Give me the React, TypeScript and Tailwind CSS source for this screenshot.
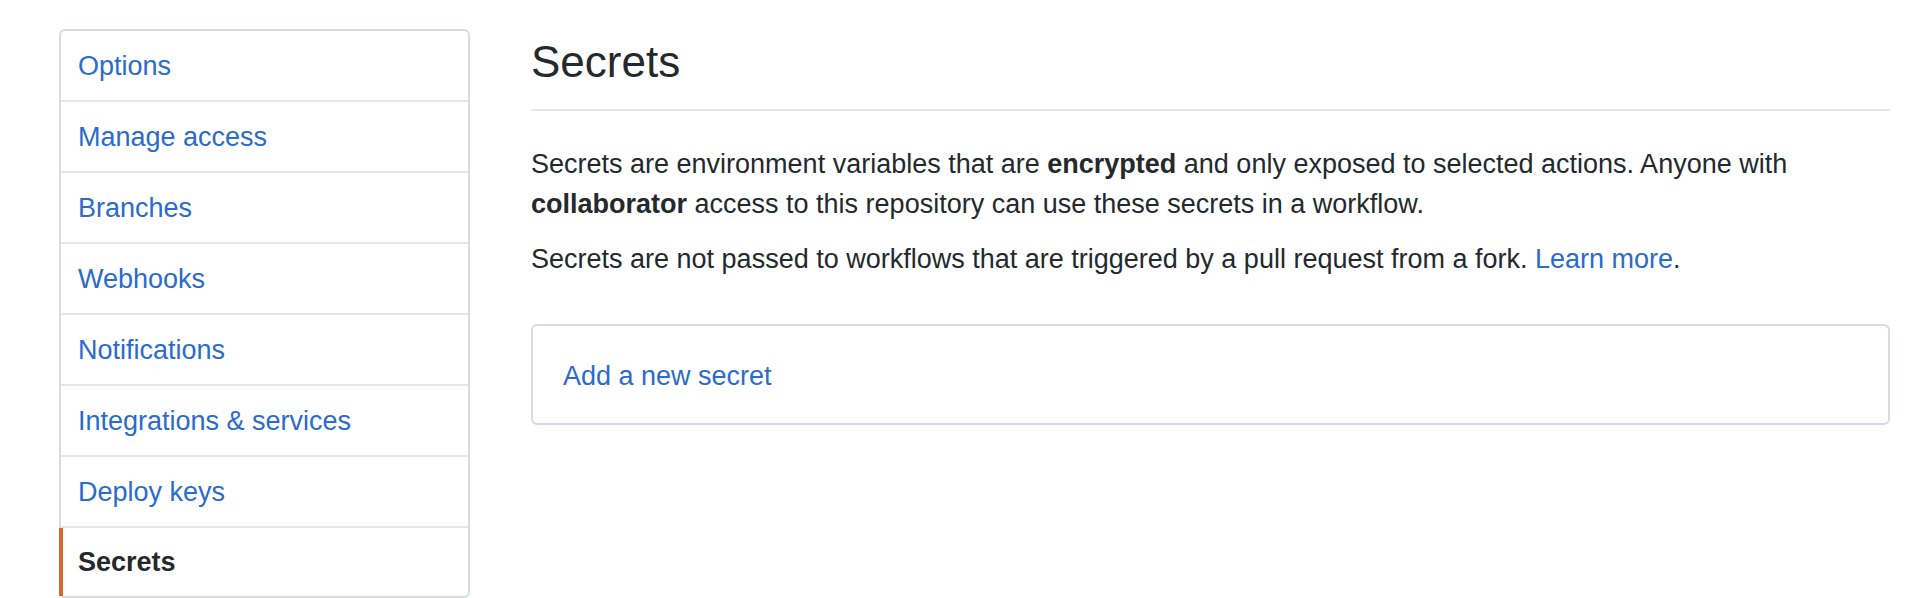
const menuItems = [
  'Options',
  'Manage access',
  'Branches',
  'Webhooks',
  'Notifications',
  'Integrations & services',
  'Deploy keys',
  'Secrets',
];

function SettingsMenu({ selected }: { selected: string }) {
  return (
    <nav className="w-[411px] shrink-0 self-start border-2 border-[#d8dbdf] rounded-[6px] bg-white">
      {menuItems.map((item, i) => {
        const isSelected = item === selected;
        const isLast = i === menuItems.length - 1;
        return (
          <div
            key={item}
            className={`relative flex items-center pl-[17px] text-[27px] leading-[40px] ${
              isLast ? 'h-[68px]' : 'h-[71px] border-b-2 border-[#e4e6e9]'
            } ${isSelected ? 'font-bold text-[#24292e]' : 'text-[#2b6bcb]'}`}
          >
            {isSelected && (
              <span className="absolute left-[-2px] top-0 bottom-0 w-[4px] bg-[#d8692e]" />
            )}
            {item}
          </div>
        );
      })}
    </nav>
  );
}

export default function App() {
  return (
    <div
      className="min-h-[598px] bg-white flex pl-[59px] pt-[29px] pr-[30px] text-[#24292e]"
      style={{ fontFamily: '"Liberation Sans", Arial, sans-serif' }}
    >
      <SettingsMenu selected="Secrets" />

      <main className="flex-1 ml-[61px] min-w-0">
        <div className="pb-[14px] border-b-2 border-[#e4e6e9]">
          <h2 className="text-[44px] leading-[66px] font-normal text-[#24292e]">Secrets</h2>
        </div>

        <p className="mt-[33px] text-[27px] leading-[40px]">
          Secrets are environment variables that are <strong className="font-bold">encrypted</strong> and
          only exposed to selected actions. Anyone with <strong className="font-bold">collaborator</strong>{' '}
          access to this repository can use these secrets in a workflow.
        </p>
        <p className="mt-[15px] text-[27px] leading-[40px]">
          Secrets are not passed to workflows that are triggered by a pull request from a fork.{' '}
          <a className="text-[#2b6bcb]" href="#">
            Learn more
          </a>
          .
        </p>

        <div className="mt-[45px] border-2 border-[#d8dbdf] rounded-[6px] pt-[30px] pb-[27px] px-[30px]">
          <a className="text-[27px] leading-[40px] text-[#2b6bcb]" href="#">
            Add a new secret
          </a>
        </div>
      </main>
    </div>
  );
}
